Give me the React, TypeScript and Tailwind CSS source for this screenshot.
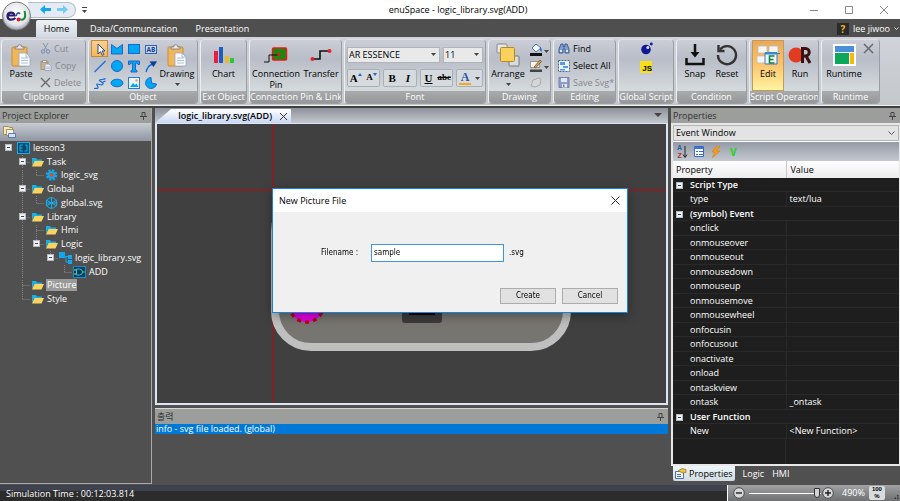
import React from "react";
import type { ReactNode } from "react";

const sans = "font-['Open_Sans','Noto_Sans','Noto_Sans_CJK_KR',sans-serif]";

/* ---------- ribbon building blocks ---------- */

function Group({ title, width, children }: { title: string; width: string; children: ReactNode }) {
  return (
    <section
      className={`${width} flex shrink-0 flex-col overflow-hidden rounded-sm border border-[#9a9da4] border-l-[#eceef0] border-t-[#dcdee2] bg-linear-to-b from-[#cbced6] via-[#b9bdc7] via-30% to-[#e0e6e6]`}
    >
      <div className="min-h-0 flex-1">{children}</div>
      <h2 className="h-3 bg-linear-to-b from-[#a8aaab] to-[#959798] text-center text-[9px] leading-3 whitespace-nowrap text-white">
        {title}
      </h2>
    </section>
  );
}

function BigButton({
  label,
  icon,
  arrow = false,
  active = false,
  width = "w-8",
}: {
  label: ReactNode;
  icon: ReactNode;
  arrow?: boolean;
  active?: boolean;
  width?: string;
}) {
  const skin = active
    ? "border border-[#c49a5a] bg-linear-to-b from-[#e9a95a] via-[#fbc66f] to-[#fff3a0]"
    : "border border-transparent";
  return (
    <button className={`${width} ${skin} flex h-full flex-col items-center pt-0.5 text-[9px] leading-[11px]`}>
      <span className="flex h-6 items-center">{icon}</span>
      <span className="mt-px whitespace-nowrap">{label}</span>
      {arrow && <DownArrow />}
    </button>
  );
}

function SmallButton({ label, icon, muted = false }: { label: string; icon: ReactNode; muted?: boolean }) {
  return (
    <button
      className={`flex h-[17px] items-center gap-[3px] text-[9px] leading-3 whitespace-nowrap ${muted ? "text-[#85888c]" : "text-black"}`}
    >
      {icon}
      {label}
    </button>
  );
}

function DownArrow() {
  return (
    <svg width="5" height="3" viewBox="0 0 5 3" className="mt-1 shrink-0">
      <path d="M0 0h5L2.500 3z" fill="#444" />
    </svg>
  );
}

function Clipboard() {
  return (
    <svg width="20" height="23" viewBox="0 0 20 23">
      <rect x="1" y="3" width="15" height="19" rx="1" fill="#f0b65c" stroke="#c98c35" />
      <path d="M4 5V3h2.500a2.200 2.200 0 0 1 4.400 0H13v2z" fill="#e8e8e8" stroke="#777" strokeWidth=".8" />
      <path d="M8 9h7l4 4v9H8z" fill="#f8fbff" stroke="#98a8c0" strokeWidth=".8" />
      <path d="M15 9v4h4M10 14h7M10 16.500h7M10 19h7" stroke="#9fb4cc" fill="none" strokeWidth=".8" />
    </svg>
  );
}

/* ---------- tools of the Object group ---------- */

const blue = { fill: "#00a8f3", stroke: "#1f66c8", strokeWidth: 1 };

const objectTools: { name: string; art: ReactNode }[] = [
  {
    name: "Select",
    art: <path d="M5 2v10l2.500-2.300 1.800 3.600 1.500-.8L9 9h3z" fill="#fff" stroke="#234a88" />,
  },
  { name: "Polygon", art: <path d="M1.500 2.500l5.500 4 5.500-4v9.500h-11z" {...blue} /> },
  { name: "Rectangle", art: <rect x="1.500" y="2.500" width="11" height="9" {...blue} /> },
  {
    name: "Text field",
    art: (
      <>
        <rect x="1.500" y="3.500" width="11" height="8" fill="#c8dcfa" stroke="#2a62c0" />
        <text x="7" y="10" textAnchor="middle" fontSize="6.500" fontWeight="700" fill="#1a3c94">
          AB
        </text>
      </>
    ),
  },
  { name: "Line", art: <path d="M1.500 13L12.500 2" stroke="#1769e0" strokeWidth="1.300" /> },
  { name: "Circle", art: <circle cx="7" cy="7" r="5.500" {...blue} /> },
  { name: "Text", art: <path d="M1.500 2h11v3.500H11L10 4H8.500v7l1.500.5V13H4v-1.500l1.500-.5V4H4L3 5.500H1.500z" {...blue} /> },
  {
    name: "Curve",
    art: (
      <>
        <path d="M2 13C3 9 5 6 9 5" fill="none" stroke="#1769e0" strokeWidth="1.300" />
        <path d="M5.500 2.500L13 2.200 9.500 8z" fill="#0d3f90" />
      </>
    ),
  },
  {
    name: "Freehand",
    art: (
      <path
        d="M1 12.500c2.500-.5 4.500.5 4-1.500S2.500 8 4.500 8s4.500 2 5.500 0-3-2-3.500-3.500S11 4 12.500 2.500M10 6l2.500-1"
        fill="none"
        stroke="#1769e0"
        strokeWidth="1.200"
      />
    ),
  },
  { name: "Ellipse", art: <ellipse cx="7" cy="7" rx="6" ry="3.800" {...blue} /> },
  {
    name: "Image",
    art: (
      <>
        <rect x="1.500" y="1.500" width="11" height="11" fill="#e8f5ff" stroke="#2f78d0" />
        <path d="M3 11l3-4 2 2 1.500-1.500L11.500 11z" fill="#00a8f3" />
        <circle cx="9.500" cy="4.500" r="1.200" fill="#f0a030" />
      </>
    ),
  },
  { name: "Pie", art: <path d="M7 1.500A5.500 5.500 0 1 0 12.500 8L7.500 7z" {...blue} /> },
];

/* ---------- ribbon ---------- */

function RibbonSelect({ label, value, width }: { label: string; value: string; width: string }) {
  return (
    <label className={`${width} relative block`}>
      <span className="sr-only">{label}</span>
      <select
        defaultValue={value}
        className="block h-4 w-full appearance-none border border-[#b0b3b8] bg-[#e9e9ea] pl-px text-[9px] leading-[14px]"
      >
        <option>{value}</option>
      </select>
      <span className="pointer-events-none absolute top-0.5 right-1">
        <DownArrow />
      </span>
    </label>
  );
}

const fontButton = "flex h-4 flex-1 items-center justify-center font-['Liberation_Serif',serif] text-[11px] font-bold";
const fontPair = "flex h-[18px] flex-1 items-center rounded-xs border border-[#a9b0b6] bg-[#d5dade]";

function Ribbon() {
  return (
    <div className="flex h-[69px] gap-0.5 overflow-hidden border-b border-[#eceeee] bg-linear-to-b from-[#d0d3da] to-[#c3c8cb] px-px pt-0.5 pb-px">
      <Group title="Clipboard" width="w-[85px]">
        <div className="flex h-full gap-px pl-px">
          <BigButton label="Paste" icon={<Clipboard />} width="w-9" />
          <div className="flex flex-col">
            <SmallButton
              muted
              label="Cut"
              icon={
                <svg width="11" height="11" viewBox="0 0 11 11" fill="none" stroke="#7288b0">
                  <path d="M3 0l4 7M8 0L4 7" stroke="#8c96a8" />
                  <circle cx="3" cy="8.500" r="1.700" />
                  <circle cx="8" cy="8.500" r="1.700" />
                </svg>
              }
            />
            <SmallButton
              muted
              label="Copy"
              icon={
                <svg width="12" height="11" viewBox="0 0 12 11" strokeWidth=".8">
                  <rect x="1" y="1.500" width="7" height="8" fill="#c8b48c" stroke="#9c8c6c" />
                  <path d="M2.500 2.500h4V.5h-4z" fill="#eee" stroke="#888" />
                  <path d="M5 4h4l2 2v4.500H5z" fill="#f0f2f6" stroke="#8e9ab0" />
                  <path d="M6 7h4M6 8.700h4" stroke="#a0acc0" />
                </svg>
              }
            />
            <SmallButton
              muted
              label="Delete"
              icon={
                <svg width="11" height="11" viewBox="0 0 11 11" stroke="#66696e" strokeWidth="1.300">
                  <path d="M1 1l9 9M10 1L1 10" />
                </svg>
              }
            />
          </div>
        </div>
      </Group>

      <Group title="Object" width="w-[110px]">
        <div className="flex h-full">
          <div className="grid grid-cols-4 grid-rows-3 pl-0.5">
            {objectTools.map((tool, i) => (
              <button
                key={tool.name}
                aria-label={tool.name}
                className={`flex w-[17px] items-center justify-center ${i === 0 ? "border border-[#c28a3a] bg-linear-to-b from-[#f7cf93] to-[#fbb64e]" : ""}`}
              >
                <svg width="14" height="14" viewBox="0 0 14 14" className="shrink-0">
                  {tool.art}
                </svg>
              </button>
            ))}
          </div>
          <BigButton label="Drawing" icon={<Clipboard />} arrow width="w-9" />
        </div>
      </Group>

      <Group title="Ext Object" width="w-[47px]">
        <div className="flex h-full justify-center">
          <BigButton
            label="Chart"
            icon={
              <svg width="20" height="18" viewBox="0 0 20 18">
                <path d="M0 5h4v12H0z" fill="#ee1c3c" />
                <path d="M5 1h4v16H5z" fill="#1d5fc0" />
                <path d="M11 10h4v7h-4z" fill="#f0b828" />
                <path d="M16 12h4v5h-4z" fill="#28c840" />
              </svg>
            }
          />
        </div>
      </Group>

      <Group title="Connection Pin & Link" width="w-[93px]">
        <div className="flex h-full justify-between px-0.5">
          <BigButton
            label={
              <>
                Connection
                <br />
                Pin
              </>
            }
            width="w-12"
            icon={
              <svg width="26" height="18" viewBox="0 0 26 18">
                <rect x="9.500" y="2" width="14" height="12" rx="1" fill="#168a10" stroke="#f01818" strokeWidth="1.500" />
                <path d="M1 16h5V9h9" fill="none" stroke="#111" />
                <circle cx="16" cy="8.500" r="1.700" fill="#f01818" />
              </svg>
            }
          />
          <BigButton
            label="Transfer"
            width="w-9"
            icon={
              <svg width="22" height="14" viewBox="0 0 22 14">
                <path d="M2 11h8V3h10" fill="none" stroke="#111" strokeWidth="1.600" />
                <circle cx="2.500" cy="11" r="2" fill="#e8202c" />
                <circle cx="19.500" cy="3" r="2" fill="#e8202c" />
              </svg>
            }
          />
        </div>
      </Group>

      <Group title="Font" width="w-[142px]">
        <div className="flex flex-col gap-1.5 px-0.5 pt-[7px]">
          <div className="flex gap-[3px]">
            <RibbonSelect label="Font family" value="AR ESSENCE" width="w-[93px]" />
            <RibbonSelect label="Font size" value="11" width="w-10" />
          </div>
          <div className="flex gap-[3px]">
            <div className={fontPair}>
              <button aria-label="Grow font" className={fontButton}>
                A
                <svg width="4" height="3" className="mb-2">
                  <path d="M0 3h4L2 0z" fill="#2a62c0" />
                </svg>
              </button>
              <button aria-label="Shrink font" className={fontButton}>
                <span className="text-[9px]">A</span>
                <svg width="4" height="3" className="mb-2">
                  <path d="M0 0h4L2 3z" fill="#2a62c0" />
                </svg>
              </button>
            </div>
            <div className={fontPair}>
              <button className={fontButton}>B</button>
              <button className={`${fontButton} italic`}>I</button>
            </div>
            <div className={fontPair}>
              <button className={`${fontButton} underline`}>U</button>
              <button className={fontButton}>
                <span className="text-[9px] line-through">abc</span>
              </button>
            </div>
            <div className="flex h-[18px] w-[27px] items-center justify-around rounded-xs border border-[#a9b0b6] bg-[#d5dade]">
              <button className="h-[14px] border-b-2 border-[#f5a818] px-0.5 font-['Liberation_Serif',serif] text-[12px] leading-3 font-bold text-[#2a55a8]">
                A
              </button>
              <span className="pb-1">
                <DownArrow />
              </span>
            </div>
          </div>
        </div>
      </Group>

      <Group title="Drawing" width="w-[63px]">
        <div className="flex h-full gap-[3px] px-px">
          <BigButton
            label="Arrange"
            arrow
            width="w-9"
            icon={
              <svg width="24" height="24" viewBox="0 0 24 24">
                <rect x="1" y="1" width="10" height="9" rx="1" fill="#e4e8ea" stroke="#888" />
                <rect x="13" y="13" width="10" height="10" rx="1" fill="#d8dcde" stroke="#777" />
                <rect x="4.500" y="4.500" width="14" height="14" rx="1" fill="#f8d25c" stroke="#b88a20" />
              </svg>
            }
          />
          <div className="flex flex-col pt-px">
            <button aria-label="Fill colour" className="flex h-4 items-center gap-px">
              <svg width="14" height="13" viewBox="0 0 14 13">
                <path d="M3 5l4-4 5 4-5 4z" fill="#f4f8ff" stroke="#5878a8" />
                <path d="M11 4c2 1 2 3 1.500 5C11 8 10.500 6 11 4z" fill="#2868c8" />
                <path d="M1 10h12v3H1z" fill="#111" />
              </svg>
              <DownArrow />
            </button>
            <button aria-label="Outline colour" className="flex h-[17px] items-center gap-px">
              <svg width="14" height="13" viewBox="0 0 14 13">
                <rect x="1.500" y="2.500" width="9" height="6" fill="#f4f4f4" stroke="#999" />
                <path d="M5 8l6-7 1.500 1.500L6.500 9z" fill="#d8a040" stroke="#6c5020" strokeWidth=".7" />
                <path d="M1 10.500h12V13H1z" fill="#444" />
              </svg>
              <DownArrow />
            </button>
            <button aria-label="Eraser" className="flex h-4 items-center">
              <svg width="14" height="11" viewBox="0 0 14 11">
                <path d="M2 9l2-6 6-2 2 1-1 6-5 2z" fill="#d4d7da" stroke="#a8abae" />
              </svg>
            </button>
          </div>
        </div>
      </Group>

      <Group title="Editing" width="w-[63px]">
        <div className="flex h-full flex-col pl-1">
          <SmallButton
            label="Find"
            icon={
              <svg width="12" height="11" viewBox="0 0 12 11">
                <path d="M1 6l2-5h2l.5 3h1L7 1h2l2 5v4H7V6H5v4H1z" fill="#7f9fd0" stroke="#34558c" strokeWidth=".9" />
                <path d="M2 7h2v2H2zM8 7h2v2H8z" fill="#dbe7f8" />
              </svg>
            }
          />
          <SmallButton
            label="Select All"
            icon={
              <svg width="12" height="12" viewBox="0 0 12 12">
                <rect x=".5" y=".5" width="11" height="11" fill="#eaf2fa" stroke="#49688e" strokeDasharray="2 1" />
                <path d="M2 2h5v3H2zM5 6h5v2H5zM2 9h5v1.500H2z" fill="#5b9ae0" />
              </svg>
            }
          />
          <SmallButton
            label="Save Svg*"
            muted
            icon={
              <svg width="12" height="11" viewBox="0 0 12 11">
                <path d="M1 .5h10v10H1z" fill="#8c9ccc" stroke="#7480a8" />
                <path d="M3 1h6v4H3zM4 7h5v3.500H4z" fill="#e4e8f2" />
                <path d="M5 7.500h1.500V10H5z" fill="#7480a8" />
              </svg>
            }
          />
        </div>
      </Group>

      <Group title="Global Script" width="w-14">
        <div className="flex h-full flex-col items-center gap-1.5 pt-0.5">
          <button aria-label="Lua script">
            <svg width="13" height="13" viewBox="0 0 13 13">
              <circle cx="6" cy="7.500" r="4.800" fill="#101898" />
              <circle cx="7.800" cy="5.600" r="1.500" fill="#dfe3ee" />
              <circle cx="11.300" cy="2" r="1.400" fill="#101898" />
            </svg>
          </button>
          <button className="flex h-3 w-3 items-end justify-end bg-[#f7df1e] font-['Liberation_Sans',sans-serif] text-[8px] leading-2 font-bold">
            JS
          </button>
        </div>
      </Group>

      <Group title="Condition" width="w-[71px]">
        <div className="flex h-full px-0.5">
          <BigButton
            label="Snap"
            icon={
              <svg width="20" height="22" viewBox="0 0 20 22" fill="none" stroke="#111" strokeWidth="2.500">
                <path d="M1.500 14v6h17v-6" />
                <path d="M10 0v9" />
                <path d="M5.500 8h9L10 13.500z" fill="#111" stroke="none" />
              </svg>
            }
          />
          <BigButton
            label="Reset"
            icon={
              <svg width="22" height="22" viewBox="0 0 22 22" fill="none" stroke="#333" strokeWidth="2.400">
                <path d="M4 5.500A9 9 0 1 1 2 11" />
                <path d="M2.500 1v6h6" />
              </svg>
            }
          />
        </div>
      </Group>

      <Group title="Script Operation" width="w-[70px]">
        <div className="flex h-full px-0.5">
          <BigButton
            label="Edit"
            active
            icon={
              <svg width="24" height="20" viewBox="0 0 24 20">
                <g fill="#f4f4f2" stroke="#bcb8ac" strokeWidth=".7">
                  <path d="M2 1h9v7H2zM13 1h9v7h-9zM1 11h9v7H1z" />
                </g>
                <path d="M9 8h12v11H9z" fill="#eef6fa" stroke="#3b7bc0" />
                <path d="M9 7h12v2.500H9z" fill="#3b86d0" />
                <path d="M18.500 11H13.500v7h5M13.500 14.500h4" fill="none" stroke="#158040" strokeWidth="1.600" />
                <path d="M21 8.500h3" stroke="#3b7bc0" />
              </svg>
            }
          />
          <BigButton
            label="Run"
            icon={
              <svg width="24" height="20" viewBox="0 0 24 20">
                <circle cx="8" cy="10" r="7.500" fill="#e23c20" />
                <path d="M14.500 18V3.500h3a3.500 3.500 0 0 1 0 7.500h-2.500M18 11l4 7" fill="none" stroke="#3c1010" strokeWidth="3" />
              </svg>
            }
          />
        </div>
      </Group>

      <Group title="Runtime" width="w-[59px]">
        <div className="flex h-full items-start pl-[3px]">
          <BigButton
            label="Runtime"
            width="w-[38px]"
            icon={
              <svg width="23" height="22" viewBox="0 0 23 22">
                <path d="M0 0h23v22H0z" fill="#fff" />
                <path d="M2 2h19v6H2z" fill="#4a90d8" />
                <path d="M2 9h14v11H2z" fill="#0aa858" />
                <path d="M17 9h4v11h-4z" fill="#f8b808" />
              </svg>
            }
          />
          <button aria-label="Close runtime" className="mt-[3px]">
            <svg width="11" height="11" viewBox="0 0 11 11" stroke="#66696e" strokeWidth="1.500">
              <path d="M1 1l9 9M10 1L1 10" />
            </svg>
          </button>
        </div>
      </Group>
    </div>
  );
}

/* ---------- title bar and tabs ---------- */

function TitleBar() {
  return (
    <header className="relative flex h-[19px] items-center bg-white pl-7">
      <div className="flex h-4 w-12 items-center gap-1.5 rounded-r-full border border-l-0 border-[#b4bcc8] bg-[#e4ebf4] pl-3">
        {["#10a8e8", "#74ccf0"].map((fill, i) => (
          <button key={fill} aria-label={i ? "Redo" : "Undo"}>
            <svg width="11" height="9" viewBox="0 0 11 9">
              <path d={i ? "M11 4.500L6 0v3H0v3h6v3z" : "M0 4.500L5 0v3h6v3H5v3z"} fill={fill} />
            </svg>
          </button>
        ))}
      </div>
      <button aria-label="Customize toolbar" className="ml-1.5">
        <svg width="5" height="6" viewBox="0 0 5 6">
          <path d="M0 0h5v1H0zM0 3h5L2.500 6z" fill="#444" />
        </svg>
      </button>
      <h1 className="absolute inset-x-0 pl-4 text-center text-[9px] leading-4">enuSpace - logic_library.svg(ADD)</h1>
      <div className="relative ml-auto flex items-center gap-[27px] pr-3">
        <button aria-label="Minimize">
          <svg width="8" height="8" stroke="#888">
            <path d="M0 4.500h8" />
          </svg>
        </button>
        <button aria-label="Maximize">
          <svg width="8" height="8" fill="none" stroke="#888">
            <path d="M.5.500h7v7h-7z" />
          </svg>
        </button>
        <button aria-label="Close">
          <svg width="8" height="8" stroke="#888">
            <path d="M0 0l8 8M8 0L0 8" />
          </svg>
        </button>
      </div>
      <button aria-label="Application menu" className="absolute top-px left-px z-10">
        <svg width="31" height="30" viewBox="0 0 31 30">
          <defs>
            <radialGradient id="orb" cx=".5" cy=".4" r=".6">
              <stop offset="0" stopColor="#fff" />
              <stop offset=".7" stopColor="#e4e6ea" />
              <stop offset="1" stopColor="#9a9ea6" />
            </radialGradient>
          </defs>
          <circle cx="15.500" cy="15" r="14" fill="url(#orb)" stroke="#777b82" />
          <path d="M6 14.500h7.500c-.5-4.500-7-3.500-7 .5 0 4.500 5 4.500 8 2" fill="none" stroke="#2a1a70" strokeWidth="2.200" />
          <path d="M15 15c1-3.500 3-4 4-2" fill="none" stroke="#2050b0" strokeWidth="1.600" />
          <path d="M23.500 10c2 7-1 10-4.500 8" fill="none" stroke="#188838" strokeWidth="2" />
          <circle cx="17.500" cy="18.500" r="2" fill="#e01838" />
        </svg>
      </button>
    </header>
  );
}

function Tabs() {
  return (
    <nav className="flex h-[18px] items-end bg-[#4f4f4f] pl-9 text-[9px] text-white">
      <button className="h-[17px] w-[41px] rounded-t-xs bg-linear-to-b from-[#eef2f8] to-[#d4dae2] font-medium text-black">
        Home
      </button>
      <button className="ml-[13px] h-[17px]">Data/Communcation</button>
      <button className="ml-[18px] h-[17px]">Presentation</button>
      <div className="ml-auto flex h-[17px] items-center gap-1 pr-px">
        <button className="h-3 w-3 bg-[#2a2a2a] text-[10px] leading-3 font-bold text-[#f4bc18]">?</button>
        <button className="flex items-center gap-1">
          lee jiwoo
          <svg width="5" height="4" fill="none" stroke="#ddd">
            <path d="M.5.500l2 2 2-2" />
          </svg>
        </button>
      </div>
    </nav>
  );
}

function Pin() {
  return (
    <svg width="7" height="8" viewBox="0 0 7 8" fill="none" stroke="#444">
      <path d="M2 .5h3v4H2zM0 4.500h7M3.500 5v3" />
    </svg>
  );
}

function PanelHeader({ title }: { title: string }) {
  return (
    <div className="flex h-[15px] items-center justify-between bg-[#9c9e9c] pr-1 pl-0.5 text-[9px] leading-3 text-[#303234]">
      <h2>{title}</h2>
      <button aria-label={`Pin ${title}`}>
        <Pin />
      </button>
    </div>
  );
}

/* ---------- project tree ---------- */

const treeArt = {
  project: (
    <>
      <rect x=".5" y=".5" width="12" height="11" fill="#0c4668" stroke="#10b0f0" />
      <path d="M6 3H3v6h3M3 6h2.500M8 3h2v6H7.500" fill="none" stroke="#10b0f0" />
    </>
  ),
  folder: (
    <>
      <path d="M1 2h4l1 1.500h5V5H3L1 10z" fill="#18b0e8" />
      <path d="M3.500 5H13l-2.500 5.500H1z" fill="#fbd460" />
    </>
  ),
  gear: (
    <>
      <circle cx="6.500" cy="6" r="4.600" fill="none" stroke="#10a8f0" strokeWidth="2.400" strokeDasharray="2.200 1.400" />
      <circle cx="6.500" cy="6" r="4" fill="#10a8f0" />
      <circle cx="6.500" cy="6" r="1.900" fill="#f04810" />
    </>
  ),
  globe: (
    <g fill="none" stroke="#10b0f0">
      <circle cx="6.500" cy="6" r="5.300" />
      <path d="M6.500 0v12M1 3l11 6M1 9l11-6M1 6h11" />
    </g>
  ),
  nodes: (
    <>
      <path d="M0 0h6v6H0zM9 3h4v4H9zM9 8h4v4H9z" fill="#10a8f0" />
      <path d="M6 4.500h3M7 4.500V10h2" fill="none" stroke="#10a8f0" />
    </>
  ),
  gate: (
    <>
      <rect x=".5" y=".5" width="12" height="11" fill="#0c3850" stroke="#1090d0" />
      <path d="M3.500 3h3a3 3 0 0 1 0 6h-3z" fill="none" stroke="#28c8f0" />
      <path d="M1 4h2M1 8h2" stroke="#f0c030" />
      <path d="M10 6h2" stroke="#30e060" />
    </>
  ),
};

type Guide = "none" | "line" | "tee" | "end";

const guidePath: Record<Guide, string> = {
  none: "",
  line: "M6.500 0v14",
  tee: "M6.500 0v14M6.500 7.500h8",
  end: "M6.500 0v7M6.500 7.500h8",
};

const tree: { label: string; art: keyof typeof treeArt; guides: Guide[]; open?: boolean; selected?: boolean }[] = [
  { label: "lesson3", art: "project", guides: ["none"], open: true },
  { label: "Task", art: "folder", guides: ["none", "tee"], open: true },
  { label: "logic_svg", art: "gear", guides: ["none", "line", "end"] },
  { label: "Global", art: "folder", guides: ["none", "tee"], open: true },
  { label: "global.svg", art: "globe", guides: ["none", "line", "end"] },
  { label: "Library", art: "folder", guides: ["none", "tee"], open: true },
  { label: "Hmi", art: "folder", guides: ["none", "line", "tee"] },
  { label: "Logic", art: "folder", guides: ["none", "line", "end"], open: true },
  { label: "logic_library.svg", art: "nodes", guides: ["none", "line", "none", "end"], open: true },
  { label: "ADD", art: "gate", guides: ["none", "line", "none", "none", "end"] },
  { label: "Picture", art: "folder", guides: ["none", "tee"], selected: true },
  { label: "Style", art: "folder", guides: ["none", "end"] },
];

function Minus() {
  return (
    <>
      <rect x="3.500" y="3.500" width="6" height="6" fill="#f2f2f2" stroke="#b8b8b8" />
      <path d="M5 6.500h3" stroke="#24489a" />
    </>
  );
}

function ProjectExplorer() {
  return (
    <aside className="flex w-[152px] shrink-0 flex-col border-r border-b border-[#a8aaa8]">
      <PanelHeader title="Project Explorer" />
      <div className="flex h-[18px] items-center bg-linear-to-b from-[#c8ccd2] to-[#8f96a2] pl-[3px]">
        <button aria-label="View options">
          <svg width="13" height="12" viewBox="0 0 13 12" strokeWidth=".8">
            <path d="M.5.500h5l1 1h3v7h-9z" fill="#f4e8b8" stroke="#908050" />
            <path d="M3.500 3.500h7v6h-7z" fill="#fbf6e0" stroke="#908050" />
            <path d="M5.500 7.500h7v4h-7z" fill="#cfe0f8" stroke="#4868a0" />
          </svg>
        </button>
      </div>
      <ul className="grid h-[165px] auto-rows-fr pl-0.5 text-[9px] leading-3 text-white">
        {tree.map((node) => (
          <li key={node.label} className="flex min-h-0 items-center overflow-hidden">
            {node.guides.map((guide, i) => (
              <svg key={i} width="14" height="14" viewBox="0 0 14 14" className="shrink-0 overflow-visible">
                <path d={guidePath[guide]} fill="none" stroke="#858585" strokeDasharray="1 1" />
                {node.open && i === node.guides.length - 1 && <Minus />}
              </svg>
            ))}
            <svg width="13" height="12" viewBox="0 0 13 12" className="mr-0.5 ml-px shrink-0">
              {treeArt[node.art]}
            </svg>
            <span className={`px-px ${node.selected ? "bg-[#9a9a9a]" : ""}`}>{node.label}</span>
          </li>
        ))}
      </ul>
    </aside>
  );
}

/* ---------- editor and output ---------- */

function Editor() {
  return (
    <div className="flex min-h-0 flex-1 flex-col">
      <div className="flex h-[15px] items-end justify-between bg-linear-to-b from-[#8d919a] to-[#c4c8ce]">
        <div className="flex h-[14px] w-[136px] items-center justify-end gap-2 bg-linear-to-b from-white to-[#c8d8f4] pr-1 text-[9px] leading-3 font-semibold [clip-path:polygon(0_100%,16px_0,100%_0,100%_100%)]">
          <span>logic_library.svg(ADD)</span>
          <button aria-label="Close tab">
            <svg width="7" height="7" stroke="#333">
              <path d="M0 0l7 7M7 0L0 7" />
            </svg>
          </button>
        </div>
        <button aria-label="Tab list" className="pr-1.5 pb-1.5">
          <svg width="8" height="4">
            <path d="M0 0h8L4 4z" fill="#444" />
          </svg>
        </button>
      </div>
      <div className="min-h-0 flex-1 border-2 border-t border-[#dde4f2] bg-[#404040]">
        <svg className="block h-full w-full" role="img" aria-label="ADD symbol drawing">
          <rect x="115" y="0" width="2" height="100%" fill="#7e2426" />
          <rect x="0" y="65" width="100%" height="2" fill="#7e2426" />
          <rect x="118" y="71" width="292" height="152" rx="36" fill="#767570" stroke="#bfbfbf" strokeWidth="8" />
          <circle cx="149.500" cy="181" r="17" fill="#e400e4" stroke="#b80020" strokeWidth="3.500" strokeDasharray="4 4" />
          <rect x="245" y="150" width="40" height="49" rx="3" fill="#3c3c3c" />
          <rect x="252" y="150" width="26" height="41" fill="#000" />
        </svg>
      </div>
    </div>
  );
}

function Output() {
  return (
    <section className="mt-[3px] flex h-[76px] flex-col border-t border-[#d4d6d4]">
      <PanelHeader title="출력" />
      <p className="h-2.5 bg-[#0078d7] pl-px text-[9px] leading-[10px] font-medium whitespace-nowrap text-white">
        info - svg file loaded. (global)
      </p>
    </section>
  );
}

/* ---------- properties ---------- */

const properties: { name: string; value?: string; heading?: boolean }[] = [
  { name: "Script Type", heading: true },
  { name: "type", value: "text/lua" },
  { name: "(symbol) Event", heading: true },
  { name: "onclick" },
  { name: "onmouseover" },
  { name: "onmouseout" },
  { name: "onmousedown" },
  { name: "onmouseup" },
  { name: "onmousemove" },
  { name: "onmousewheel" },
  { name: "onfocusin" },
  { name: "onfocusout" },
  { name: "onactivate" },
  { name: "onload" },
  { name: "ontaskview" },
  { name: "ontask", value: "_ontask" },
  { name: "User Function", heading: true },
  { name: "New", value: "<New Function>" },
];

function Properties() {
  return (
    <aside className="ml-[3px] flex w-[229px] shrink-0 flex-col">
      <PanelHeader title="Properties" />
      <div className="flex min-h-0 flex-1 flex-col border-2 border-r border-[#e8e8e8] bg-[#1e1e1e]">
        <label className="relative block bg-white pb-px">
          <span className="sr-only">Window</span>
          <select
            defaultValue="Event Window"
            className="block h-4 w-full appearance-none border border-[#b4b4b4] bg-[#e3e3e3] pl-0.5 text-[9px] leading-[14px]"
          >
            <option>Event Window</option>
          </select>
          <svg width="7" height="5" className="pointer-events-none absolute top-1.5 right-1" fill="none" stroke="#555">
            <path d="M.5.500l3 3 3-3" />
          </svg>
        </label>
        <div className="flex h-[19px] shrink-0 items-center gap-1.5 bg-linear-to-b from-[#949ba6] to-[#c4c9d0] pl-1">
          <button aria-label="Sort" className="flex items-center">
            <span className="flex flex-col font-['Liberation_Sans',sans-serif] text-[7px] leading-[8px] font-bold">
              <span className="text-[#3058a8]">A</span>
              <span className="text-[#a83030]">Z</span>
            </span>
            <svg width="6" height="12">
              <path d="M3 0v11M1 8.500l2 3 2-3" stroke="#222" fill="none" />
            </svg>
          </button>
          <button aria-label="Categories">
            <svg width="10" height="11">
              <path d="M.5.500h9v10h-9z" fill="#fff" stroke="#3868c8" />
              <path d="M1 1h8v2H1z" fill="#3878e0" />
              <path d="M2 5.500h2M5 5.500h4M2 8.500h2M5 8.500h4" stroke="#3868c8" />
            </svg>
          </button>
          <button aria-label="Events" className="ml-px">
            <svg width="9" height="12">
              <path d="M6 0L1 6h3l-3 6 8-7H5l4-5z" fill="#f8a010" stroke="#d87008" strokeWidth=".5" />
            </svg>
          </button>
          <button className="ml-1 text-[10px] leading-3 font-bold text-[#18d818]">V</button>
        </div>
        <table className="h-[278px] w-full shrink-0 table-fixed border-collapse text-left text-[9px] leading-3 text-white">
          <thead>
            <tr className="h-[17px] bg-linear-to-b from-white to-[#ececec] text-black">
              <th className="w-[113px] border-r border-[#c8c8c8] p-0 pl-[3px] font-normal">Property</th>
              <th className="p-0 pl-1 font-normal">Value</th>
            </tr>
          </thead>
          <tbody>
            {properties.map((row) => (
              <tr key={row.name} className="border-b border-[#292929]">
                {row.heading ? (
                  <th colSpan={2} className="p-0 font-semibold">
                    <div className="flex h-3 items-center">
                      <svg width="14" height="12" className="mr-[3px]">
                        <Minus />
                      </svg>
                      {row.name}
                    </div>
                  </th>
                ) : (
                  <>
                    <td className="border-r border-[#292929] p-0 pl-[17px]">{row.name}</td>
                    <td className="p-0 pl-[3px]">{row.value}</td>
                  </>
                )}
              </tr>
            ))}
          </tbody>
        </table>
        <div className="w-[113px] flex-1 border-r border-[#292929]" />
      </div>
      <nav className="flex h-[18px] items-start gap-2 pl-0.5 text-[9px] leading-[15px] text-white">
        <button className="flex h-[15px] items-center gap-0.5 rounded-b-xs bg-linear-to-b from-[#eef6f8] to-[#d0dce2] px-0.5 text-black">
          <svg width="12" height="11">
            <path d="M.5 3.500h8v7h-8z" fill="#eef4fc" stroke="#5070a8" />
            <path d="M2 6.500h4M2 8.500h4" stroke="#5070a8" />
            <path d="M3 3l4-2.500 4 1v3L8 5z" fill="#f4c038" stroke="#80601c" strokeWidth=".6" />
          </svg>
          Properties
        </button>
        <button>Logic</button>
        <button>HMI</button>
      </nav>
    </aside>
  );
}

/* ---------- status bar ---------- */

function StatusBar() {
  return (
    <footer className="flex h-4 shrink-0 text-[9px] text-white">
      <div className="flex-1 bg-linear-to-b from-[#3e414e] from-35% to-[#2c2c2c] to-35% pt-0.5 pl-1.5 leading-[13px] font-medium">
        Simulation Time : 00:12:03.814
      </div>
      <div className="flex w-[173px] items-center border-l border-white bg-linear-to-b from-[#a0a2a4] to-[#6e7072] pl-[5px]">
        <ZoomButton name="Zoom out" d="M3 6h6" />
        <label className="mr-px ml-1 block">
          <span className="sr-only">Zoom</span>
          <input
            type="range"
            min={0}
            max={500}
            defaultValue={490}
            className="block h-3 w-[72px] appearance-none bg-[linear-gradient(#fff,#fff)] bg-[length:100%_1px] bg-center bg-no-repeat [&::-webkit-slider-thumb]:h-2.5 [&::-webkit-slider-thumb]:w-1.5 [&::-webkit-slider-thumb]:appearance-none [&::-webkit-slider-thumb]:rounded-b-full [&::-webkit-slider-thumb]:border [&::-webkit-slider-thumb]:border-[#333] [&::-webkit-slider-thumb]:bg-[#d0d2d4]"
          />
        </label>
        <ZoomButton name="Zoom in" d="M3 6h6M6 3v6" />
        <span className="ml-2">490%</span>
        <button className="ml-1 h-[14px] w-4 rounded-xs bg-[#d8dcde] text-center font-['Liberation_Sans',sans-serif] text-[6px] leading-[7px] font-bold text-black">
          100
          <br />%
        </button>
        <svg width="6" height="6" className="mr-px ml-auto self-end" fill="#333">
          <path d="M4 0h1.500v1.500H4zM4 2.500h1.500V4H4zM1.500 2.500H3V4H1.500z" />
        </svg>
      </div>
    </footer>
  );
}

function ZoomButton({ name, d }: { name: string; d: string }) {
  return (
    <button aria-label={name}>
      <svg width="12" height="12" viewBox="0 0 12 12">
        <circle cx="6" cy="6" r="5.300" fill="#d4d6d8" stroke="#4c4e50" />
        <path d={d} stroke="#222" strokeWidth="1.400" />
      </svg>
    </button>
  );
}

/* ---------- dialog ---------- */

function NewPictureDialog() {
  const tahoma = "font-['DejaVu_Sans_Condensed','DejaVu_Sans',sans-serif]";
  const button = "h-4 w-14 border border-[#adadad] bg-[#e1e1e1] text-[8px] leading-[14px]";
  return (
    <div className="fixed inset-0 flex items-center justify-center">
      <form
        role="dialog"
        aria-labelledby="dialog-title"
        className="flex h-[125px] w-[356px] flex-col border border-[#1883d7] bg-[#f0f0f0] shadow-[0_3px_10px_rgba(0,0,0,0.35)]"
        onSubmit={(e) => e.preventDefault()}
      >
        <div className="flex h-[23px] items-center justify-between bg-white pr-[7px] pl-1.5">
          <h2 id="dialog-title" className="text-[9px] leading-3">
            New Picture File
          </h2>
          <button type="button" aria-label="Close dialog">
            <svg width="9" height="9" stroke="#222">
              <path d="M.5.500l8 8M8.500.500l-8 8" />
            </svg>
          </button>
        </div>
        <div className={`${tahoma} flex flex-1 flex-col justify-between pt-8 pr-[9px] pb-2 text-[8px] leading-3`}>
          <div className="flex items-center pl-12">
            <label htmlFor="filename" className="w-[50px]">
              Filename :
            </label>
            <input
              id="filename"
              defaultValue="sample"
              className="h-[18px] w-[133px] border border-[#3c96e0] bg-white px-0.5 pb-0.5 outline-none"
            />
            <span className="ml-[5px]">.svg</span>
          </div>
          <div className="flex justify-end gap-1.5">
            <button className={button}>Create</button>
            <button type="button" className={button}>
              Cancel
            </button>
          </div>
        </div>
      </form>
    </div>
  );
}

export default function App() {
  return (
    <div className={`${sans} flex h-screen flex-col overflow-hidden bg-[#505050] text-black`}>
      <TitleBar />
      <Tabs />
      <Ribbon />
      <main className="flex min-h-0 flex-1 border-t-2 border-[#404040] pb-px">
        <ProjectExplorer />
        <div className="ml-[3px] flex min-w-0 flex-1 flex-col">
          <Editor />
          <Output />
        </div>
        <Properties />
      </main>
      <StatusBar />
      <NewPictureDialog />
    </div>
  );
}
